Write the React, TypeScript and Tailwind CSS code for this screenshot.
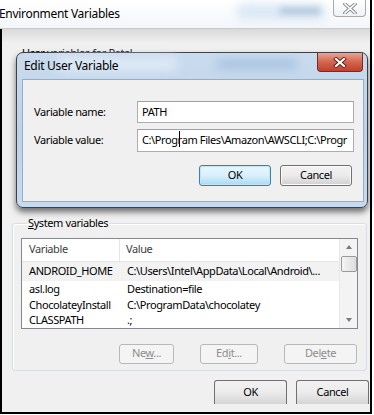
import React from "react";

const font = { fontFamily: '"Noto Sans", "Open Sans", sans-serif' };

const rows = [
  { name: "ANDROID_HOME", value: "C:\\Users\\Intel\\AppData\\Local\\Android\\...", h: "h-[19px] bg-[#f2f2f2]" },
  { name: "asl.log", value: "Destination=file", h: "h-[17px]" },
  { name: "ChocolateyInstall", value: "C:\\ProgramData\\chocolatey", h: "h-[15px]" },
  { name: "CLASSPATH", value: ".;", h: "h-[15px]" },
];

const DisabledButton = ({ label, width }: { label: React.ReactNode; width: string }) => (
  <div
    className={`${width} h-[20px] flex items-center justify-center rounded-[3px] border border-[#b5b9bc] bg-[#f4f4f4] text-[#8d8d8d]`}
  >
    {label}
  </div>
);

const Button = ({ label, primary }: { label: string; primary?: boolean }) => (
  <div
    className={
      primary
        ? "w-[72px] h-[21px] flex items-center justify-center rounded-[3px] border border-[#3c7fb1] bg-gradient-to-b from-[#eaf6fd] via-[#d9f0fc] to-[#a7d9f5] shadow-[inset_0_0_0_1px_#bfe6f8]"
        : "w-[72px] h-[21px] flex items-center justify-center rounded-[3px] border border-[#707070] bg-gradient-to-b from-[#f2f2f2] via-[#ebebeb] to-[#d0d0d0] shadow-[inset_0_0_0_1px_#fbfbfb]"
    }
  >
    {label}
  </div>
);

export default function App() {
  return (
    <div
      className="relative w-[374px] h-[415px] overflow-hidden bg-white text-[11px] tracking-[-0.4px] text-black"
      style={font}
    >
      {/* outer window */}
      <div className="w-[372px] h-[414px] flex flex-col border-r-2 border-black">
        <div className="relative h-[29px] shrink-0 bg-gradient-to-b from-white to-[#f3f6fa] border-b border-[#c9c9c9] flex items-center">
          <div className="absolute left-[236px] top-[4px] w-[90px] h-[16px] rounded-full bg-[#dbe8f5] blur-[5px]" />
          <div className="absolute left-[280px] top-[8px] w-[40px] h-[6px] bg-[#aec3da] blur-[3px]" />
          <span className="relative -ml-[1px] text-[12px] tracking-[-0.3px]">Environment Variables</span>
          <div className="absolute right-[4px] top-0 w-[33px] h-[17px] border border-t-0 border-[#a9a9a9] rounded-b-[4px] bg-gradient-to-b from-white to-[#eef2f6] flex items-center justify-center">
            <svg width="14" height="11" viewBox="0 0 14 11">
              <path d="M2 1 L12 10 M12 1 L2 10" stroke="#8a8a8a" strokeWidth="3.4" strokeLinecap="square" />
              <path d="M2 1 L12 10 M12 1 L2 10" stroke="#ffffff" strokeWidth="1.6" strokeLinecap="square" />
            </svg>
          </div>
        </div>
        <div className="flex-1 flex flex-col border-l-2 border-b-2 border-black bg-[#f0f0f0] bg-[linear-gradient(to_bottom,#d9d9d9,#f0f0f0_14px)]">
          {/* user variables area, hidden behind the dialog */}
          <div className="h-[186px] shrink-0 pl-[20px] pt-[16px]">User variables for Patel</div>
          <fieldset className="ml-[10px] w-[352px] h-[156px] border border-[#d5dfe5] rounded-[3px] px-[8px] shadow-[inset_1px_1px_0_#ffffff]">
            <legend className="ml-[6px] px-[1px]">
              <span className="underline">S</span>ystem variables
            </legend>
            <div className="mt-[6px] w-[337px] h-[91px] border border-[#828790] bg-white flex">
              <div className="flex-1 flex flex-col overflow-hidden">
                <div className="h-[23px] shrink-0 flex items-center border-b border-[#e5e5e5] text-[#3d3d3d]">
                  <div className="w-[98px] h-full flex items-center pl-[7px] border-r border-[#e5e5e5]">Variable</div>
                  <div className="pl-[6px]">Value</div>
                </div>
                {rows.map((r) => (
                  <div key={r.name} className={`shrink-0 flex items-center leading-[14px] ${r.h}`}>
                    <div className="w-[99px] pl-[7px] whitespace-nowrap">{r.name}</div>
                    <div className="pl-[6px] whitespace-nowrap">{r.value}</div>
                  </div>
                ))}
              </div>
              <div className="w-[18px] flex flex-col items-center bg-[#f3f3f3] border-l border-[#e8e8e8]">
                <svg width="8" height="17" viewBox="0 0 8 17">
                  <path d="M1 10 L4 6 L7 10 Z" fill="#7a7a7a" />
                </svg>
                <div className="w-[16px] h-[16px] rounded-[2px] border border-[#9a9a9a] bg-gradient-to-r from-[#f5f5f5] to-[#dcdcdc]" />
                <div className="flex-1" />
                <svg width="8" height="16" viewBox="0 0 8 16">
                  <path d="M1 6 L7 6 L4 10 Z" fill="#7a7a7a" />
                </svg>
              </div>
            </div>
            <div className="mt-[15px] flex justify-end gap-[26px] pr-[1px]">
              <DisabledButton width="w-[55px]" label={<span>Ne<span className="underline">w</span>...</span>} />
              <DisabledButton width="w-[58px]" label={<span>Ed<span className="underline">i</span>t...</span>} />
              <DisabledButton width="w-[73px]" label={<span>Del<span className="underline">e</span>te</span>} />
            </div>
          </fieldset>
          <div className="mt-[9px] flex justify-end gap-[9px] pr-[1px]">
            <div className="w-[73px] h-[24px] flex items-center justify-center rounded-t-[3px] border border-b-0 border-[#707070] bg-gradient-to-b from-[#f2f2f2] via-[#ebebeb] to-[#d5d5d5]">OK</div>
            <div className="w-[73px] h-[24px] flex items-center justify-center rounded-t-[3px] border border-b-0 border-[#707070] bg-gradient-to-b from-[#f2f2f2] via-[#ebebeb] to-[#d5d5d5]">Cancel</div>
          </div>
        </div>
      </div>

      {/* Edit User Variable dialog */}
      <div className="absolute left-[16px] top-[52px] w-[352px] h-[156px] rounded-[7px] border border-[#3f3f3f] bg-gradient-to-b from-[#c9dbee] via-[#bcd2ea] to-[#c7daef] shadow-[0_4px_6px_rgba(0,0,0,0.55)]">
        <div className="absolute left-[40px] top-[4px] w-[120px] h-[14px] bg-[#dfeaf6] blur-[6px]" />
        <div className="absolute left-[200px] top-[6px] w-[80px] h-[10px] bg-[#a9c4e0] blur-[5px]" />
        <div className="relative h-[25px] pl-[7px] flex items-center text-[12px] tracking-[-0.3px]">Edit User Variable</div>
        <div className="absolute right-[4px] top-0 w-[46px] h-[19px] rounded-b-[4px] border border-t-0 border-[#7a2a1e] bg-gradient-to-b from-[#e8a594] via-[#d2654e] to-[#c2402a] flex items-center justify-center">
          <svg width="14" height="11" viewBox="0 0 14 11">
            <path d="M3 2 L11 9 M11 2 L3 9" stroke="#5a2018" strokeWidth="4" strokeLinecap="square" />
            <path d="M3 2 L11 9 M11 2 L3 9" stroke="#ffffff" strokeWidth="2.2" strokeLinecap="square" />
          </svg>
        </div>
        <div className="relative ml-[5px] mr-[3px] mt-[1px] h-[123px] border border-[#93aecb] bg-[#f0f0f0] pl-[11px] pt-[21px]">
          <div className="flex items-center h-[22px]">
            <div className="w-[103px]">Variable name:</div>
            <div className="w-[217px] h-[22px] border border-[#abadb3] border-t-[#9ea0a6] bg-white flex items-center pl-[4px]">PATH</div>
          </div>
          <div className="flex items-center h-[23px] mt-[6px]">
            <div className="w-[103px]">Variable value:</div>
            <div className="w-[217px] h-[23px] border border-[#abadb3] border-t-[#9ea0a6] bg-white flex items-center pl-[4px] overflow-hidden">
              <span className="whitespace-nowrap">
                C:\Prog
                <span className="relative">
                  r
                  <span className="absolute left-[1px] -top-[1px] w-[1px] h-[16px] bg-black" />
                </span>
                am Files\Amazon\AWSCLI;C:\Progr
              </span>
            </div>
          </div>
          <div className="mt-[13px] flex justify-end gap-[9px] pr-[11px]">
            <Button label="OK" primary />
            <Button label="Cancel" />
          </div>
        </div>
      </div>
    </div>
  );
}
